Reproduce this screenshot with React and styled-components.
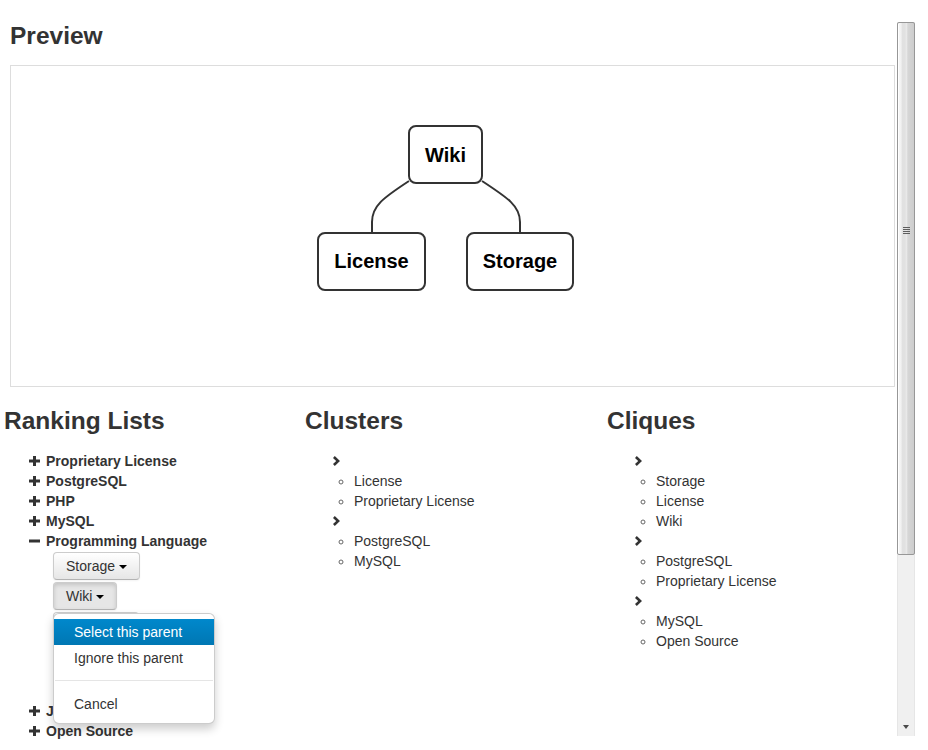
import React from 'react';
import styled, { createGlobalStyle } from 'styled-components';

const GlobalStyle = createGlobalStyle`
  html, body {
    margin: 0;
    padding: 0;
    overflow: hidden;
    background: #fff;
  }
  body {
    font-family: "Liberation Sans", Arial, sans-serif;
    font-size: 14px;
    line-height: 20px;
    color: #333;
  }
`;

const rankings = [
  { name: 'Proprietary License' },
  { name: 'PostgreSQL' },
  { name: 'PHP' },
  { name: 'MySQL' },
  {
    name: 'Programming Language',
    open: true,
    parents: ['Storage', 'Wiki', 'License', 'PHP', 'MySQL'],
  },
  { name: 'JavaScript' },
  { name: 'Open Source' },
];

const clusters = [
  ['License', 'Proprietary License'],
  ['PostgreSQL', 'MySQL'],
];

const cliques = [
  ['Storage', 'License', 'Wiki'],
  ['PostgreSQL', 'Proprietary License'],
  ['MySQL', 'Open Source'],
];

const PlusIcon = () => (
  <svg width="11" height="10" viewBox="0 0 11 10" fill="#333">
    <rect x="0" y="3.5" width="11" height="3" />
    <rect x="4" y="0" width="3" height="10" />
  </svg>
);

const MinusIcon = () => (
  <svg width="11" height="10" viewBox="0 0 11 10" fill="#333">
    <rect x="0" y="3.5" width="11" height="3" />
  </svg>
);

const ChevronIcon = () => (
  <svg width="8" height="10" viewBox="0 0 8 10" fill="#333">
    <path d="M1.8 0 L0 1.9 L3.2 5 L0 8.1 L1.8 10 L7 5 Z" />
  </svg>
);

const Diagram = () => (
  <svg width="884" height="320" viewBox="0 0 884 320">
    <g fill="none" stroke="#333" strokeWidth="2">
      <path d="M398 115 C372 132 361 140 361 156 L361 167" />
      <path d="M471 115 C497 132 509 140 509 156 L509 167" />
    </g>
    <g fill="#fff" stroke="#333" strokeWidth="2">
      <rect x="398" y="60" width="73" height="57" rx="7" />
      <rect x="307" y="167" width="107" height="57" rx="7" />
      <rect x="456" y="167" width="106" height="57" rx="7" />
    </g>
    <g
      fill="#000"
      fontFamily='"Liberation Sans", Arial, sans-serif'
      fontWeight="bold"
      fontSize="20"
      textAnchor="middle"
    >
      <text x="434.5" y="96">Wiki</text>
      <text x="360.5" y="202">License</text>
      <text x="509" y="202">Storage</text>
    </g>
  </svg>
);

// buttons further down sit under the open menu
const ParentButton = ({ label, open, hidden }) => (
  <ButtonGroup $hidden={hidden}>
    <Button $active={open}>
      {label}
      <Caret />
    </Button>
    {open && (
      <Menu>
        <MenuItem $active>Select this parent</MenuItem>
        <MenuItem>Ignore this parent</MenuItem>
        <Divider />
        <MenuItem>Cancel</MenuItem>
      </Menu>
    )}
  </ButtonGroup>
);

const GroupList = ({ groups }) => (
  <TreeList $indent={30}>
    {groups.map((group, i) => (
      <li key={i}>
        <Row>
          <ChevronIcon />
        </Row>
        <BulletList>
          {group.map(item => (
            <li key={item}>{item}</li>
          ))}
        </BulletList>
      </li>
    ))}
  </TreeList>
);

export default function App() {
  return (
    <Page>
      <GlobalStyle />
      <Main>
        <PreviewArea>
          <Title>Preview</Title>
          <PreviewBox>
            <Diagram />
          </PreviewBox>
        </PreviewArea>

        <Columns>
          <Column>
            <Title $small>Ranking Lists</Title>
            <TreeList $indent={27}>
              {rankings.map(item => (
                <li key={item.name}>
                  <Row>
                    {item.open ? <MinusIcon /> : <PlusIcon />}
                    <RankName>{item.name}</RankName>
                  </Row>
                  {item.open && (
                    <ButtonStack>
                      {item.parents.map((p, i) => (
                        <ParentButton
                          key={p}
                          label={p}
                          open={i === 1}
                          hidden={i > 2}
                        />
                      ))}
                    </ButtonStack>
                  )}
                </li>
              ))}
            </TreeList>
          </Column>

          <Column>
            <Title $small>Clusters</Title>
            <GroupList groups={clusters} />
          </Column>

          <Column>
            <Title $small>Cliques</Title>
            <GroupList groups={cliques} />
          </Column>
        </Columns>
      </Main>

      <Scrollbar>
        <Thumb>
          <Grip />
        </Thumb>
        <Track />
        <ArrowButton>
          <DownArrow />
        </ArrowButton>
      </Scrollbar>
    </Page>
  );
}

const Page = styled.div`
  display: flex;
  align-items: flex-start;
  width: 928px;
  height: 750px;
  overflow: hidden;
`;

const Main = styled.div`
  width: 897px;
  flex: none;
`;

const PreviewArea = styled.section`
  padding: 21px 0 0 10px;
`;

const Title = styled.h2`
  margin: 0 0 ${p => (p.$small ? '15px' : '14px')};
  padding-left: ${p => (p.$small ? '2px' : '0')};
  font-size: 24.5px;
  line-height: 30px;
  font-weight: bold;
  color: #333;
`;

const PreviewBox = styled.div`
  width: 885px;
  height: 322px;
  box-sizing: border-box;
  border: 1px solid #ddd;

  & svg {
    display: block;
  }
`;

const Columns = styled.div`
  display: grid;
  grid-template-columns: 301px 302px 1fr;
  padding-left: 2px;
  margin-top: 19px;
`;

const Column = styled.section`
  min-width: 0;
`;

const TreeList = styled.ul`
  list-style: none;
  margin: 0;
  padding: 0 0 0 ${p => p.$indent}px;
`;

const Row = styled.div`
  display: flex;
  align-items: center;
  height: 20px;
`;

const RankName = styled.span`
  margin-left: 6px;
  font-weight: bold;
  color: #333;
`;

const ButtonStack = styled.div`
  display: flex;
  flex-direction: column;
  align-items: flex-start;
  gap: 2px;
  margin-left: 24px;
  padding: 1px 0 1px;
`;

const ButtonGroup = styled.div`
  position: relative;
  visibility: ${p => (p.$hidden ? 'hidden' : 'visible')};
`;

const Button = styled.button`
  display: flex;
  align-items: center;
  height: 28px;
  padding: 3px 12px;
  box-sizing: border-box;
  font-family: "Liberation Sans", Arial, sans-serif;
  font-size: 14px;
  line-height: 20px;
  color: #333;
  border: 1px solid #ccc;
  border-bottom-color: #b3b3b3;
  border-radius: 4px;
  background: ${p =>
    p.$active ? '#e6e6e6' : 'linear-gradient(to bottom, #ffffff, #e6e6e6)'};
  box-shadow: ${p =>
    p.$active
      ? 'inset 0 2px 4px rgba(0, 0, 0, 0.15), 0 1px 2px rgba(0, 0, 0, 0.05)'
      : 'inset 0 1px 0 rgba(255, 255, 255, 0.2), 0 1px 2px rgba(0, 0, 0, 0.05)'};
  cursor: pointer;
`;

const Caret = styled.span`
  width: 0;
  height: 0;
  margin-left: 4px;
  margin-top: 1px;
  border-top: 4px solid #000;
  border-left: 4px solid transparent;
  border-right: 4px solid transparent;
`;

const Menu = styled.ul`
  position: absolute;
  top: calc(100% + 3px);
  left: 0;
  z-index: 10;
  width: 162px;
  box-sizing: border-box;
  margin: 0;
  padding: 5px 0 6px;
  list-style: none;
  background: #fff;
  border: 1px solid rgba(0, 0, 0, 0.2);
  border-radius: 6px;
  box-shadow: 0 5px 10px rgba(0, 0, 0, 0.2);
`;

const MenuItem = styled.li`
  padding: 3px 20px;
  line-height: 20px;
  white-space: nowrap;
  color: ${p => (p.$active ? '#fff' : '#333')};
  background: ${p =>
    p.$active ? 'linear-gradient(to bottom, #0088cc, #0077b3)' : 'transparent'};
`;

const Divider = styled.li`
  height: 1px;
  margin: 9px 1px 10px;
  background: #e5e5e5;
`;

const BulletList = styled.ul`
  list-style: circle;
  margin: 0;
  padding-left: 21px;
  color: #333;

  & li::marker {
    color: #666;
  }
`;

const Scrollbar = styled.div`
  display: flex;
  flex-direction: column;
  flex: none;
  width: 18px;
  height: 714px;
  margin-top: 22px;
  box-sizing: border-box;
  background: #f0f0f0;
  border-left: 1px solid #e6e6e6;
  border-right: 1px solid #e6e6e6;
`;

const Thumb = styled.div`
  height: 533px;
  margin: 0 -1px;
  box-sizing: border-box;
  padding-top: 204px;
  border: 1px solid #979797;
  border-radius: 2px;
  background: linear-gradient(
    to right,
    #f7f7f7 0%,
    #f2f2f2 18%,
    #e1e1e1 28%,
    #e1e1e1 45%,
    #ebebeb 52%,
    #d6d6d6 62%,
    #cdcdcd 100%
  );
  box-shadow: inset 1px 0 0 #fff;
`;

const Grip = styled.div`
  width: 7px;
  height: 7px;
  margin: 0 auto;
  background: repeating-linear-gradient(
    to bottom,
    #5e5e5e 0 1px,
    transparent 1px 2px
  );
`;

const Track = styled.div`
  flex: 1;
`;

const ArrowButton = styled.div`
  display: flex;
  align-items: center;
  justify-content: center;
  height: 18px;
`;

const DownArrow = styled.span`
  width: 0;
  height: 0;
  border-top: 4px solid #4a4a4a;
  border-left: 3.5px solid transparent;
  border-right: 3.5px solid transparent;
`;
